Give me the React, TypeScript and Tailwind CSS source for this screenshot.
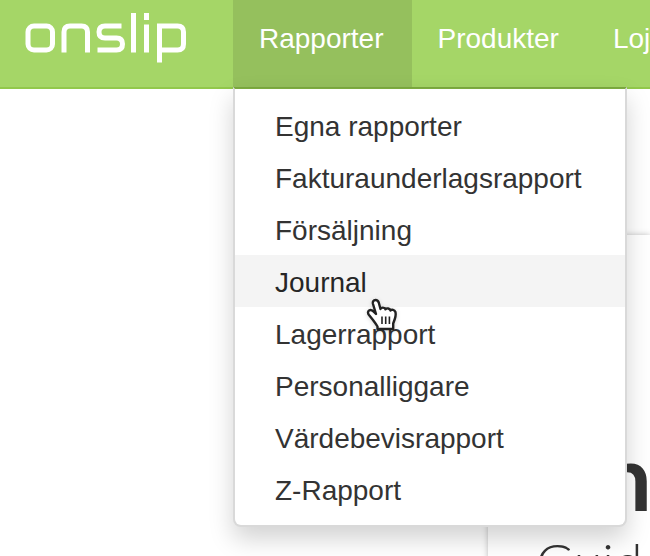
import React from 'react';

interface NavItem {
  label: string;
  active?: boolean;
}

const navItems: NavItem[] = [
  { label: 'Rapporter', active: true },
  { label: 'Produkter' },
  { label: 'Loj' },
];

const reports = [
  'Egna rapporter',
  'Fakturaunderlagsrapport',
  'Försäljning',
  'Journal',
  'Lagerrapport',
  'Personalliggare',
  'Värdebevisrapport',
  'Z-Rapport',
];

const Logo: React.FC = () => (
  <svg
    viewBox="0 0 164 54"
    className="w-[164px] h-[54px]"
    fill="none"
    stroke="#ffffff"
    strokeWidth="5"
    role="img"
    aria-label="onslip"
  >
    <rect x="4" y="16" width="24.500" height="24" rx="6" />
    <path d="M40 42.500V22q0-6 6-6h11.500q6 0 6 6V42.500" />
    <path d="M97.500 16H81q-6 0-6 6t6 6h11.500q6 0 6 6t-6 6H73.500" />
    <path d="M109.500 3V42.500M122.500 14.500V42.500M122.500 3v7" />
    <path d="M135.500 52.500V16h18q6 0 6 6v12q0 6-6 6h-18" />
  </svg>
);

const HandCursor: React.FC = () => (
  <svg
    viewBox="0 0 44 44"
    className="absolute left-[127px] top-[37px] z-10 size-11 pointer-events-none drop-shadow-sm"
    aria-hidden="true"
  >
    <path
      d="M13.500 8c1.800 0 2.800 1 3.300 2.700L18.500 17c.5-1.800 4.300-2 5 .3 1-1.500 4.500-1 5 1.200 1.200-1.300 4-.8 4.800 1.200.7 2.300.3 5-.5 7.300l-1.600 4.500V37H15.500v-2.500c-1.500-2.500-3-4.500-4.500-6.500l-4-5c-1.500-2-1.200-4 .3-4.700 1.700-.7 3.500.2 5.200 2.200l1.500 1.500L11 12c-.6-2.300.5-4 2.500-4z"
      fill="#ffffff"
      stroke="#222222"
      strokeWidth="2.400"
      strokeLinejoin="round"
    />
    <path d="M20 24.500v7.500M23.700 24.500v7.500M27.400 24.500v7.500" stroke="#222222" strokeWidth="1.600" />
  </svg>
);

const ReportMenu: React.FC = () => (
  <ul className="absolute left-0 top-full z-10 min-w-[394px] py-2.5 bg-white bg-clip-padding border-2 border-t-black/15 border-x-[#d9d9d9] border-b-[#d9d9d9] rounded-b-lg shadow-[0_12px_24px_rgba(0,0,0,0.175)]">
    {reports.map((name) => (
      <li key={name} className="relative">
        <a
          href="#"
          className={`block px-10 pt-1 leading-[48px] whitespace-nowrap ${
            name === 'Journal' ? 'bg-[#f4f4f4] text-[#262626]' : 'text-[#333333]'
          }`}
        >
          {name}
        </a>
        {name === 'Journal' && <HandCursor />}
      </li>
    ))}
  </ul>
);

export default function App() {
  return (
    <div className="h-screen overflow-hidden bg-white font-['Liberation_Sans',Arial,sans-serif] text-[28px]">
      <header className="flex bg-[#a5d667] border-b-2 border-[#92c84b]">
        <a href="#" className="shrink-0 w-[233px] pl-6 pt-2.5">
          <Logo />
        </a>
        <nav className="flex">
          {navItems.map((item) => (
            <div key={item.label} className="relative shrink-0">
              <a
                href="#"
                className={`block h-[87px] pl-[26px] pr-7 leading-[78px] text-white ${item.active ? 'bg-[#95c05d]' : ''}`}
              >
                {item.label}
              </a>
              {item.active && <ReportMenu />}
            </div>
          ))}
        </nav>
      </header>

      {/* Welcome card, mostly hidden behind the open menu */}
      <main className="pl-[488px] pt-[146px]">
        <section className="pl-12 pt-[186px] bg-white shadow-[0_0_6px_rgba(0,0,0,0.25)] font-[Lato,sans-serif] text-[#333333] whitespace-nowrap">
          <h1 className="pl-16 text-[92px] leading-[110px] font-bold">n</h1>
          <p className="text-[52px] leading-[60px] font-light">Guide</p>
        </section>
      </main>
    </div>
  );
}
